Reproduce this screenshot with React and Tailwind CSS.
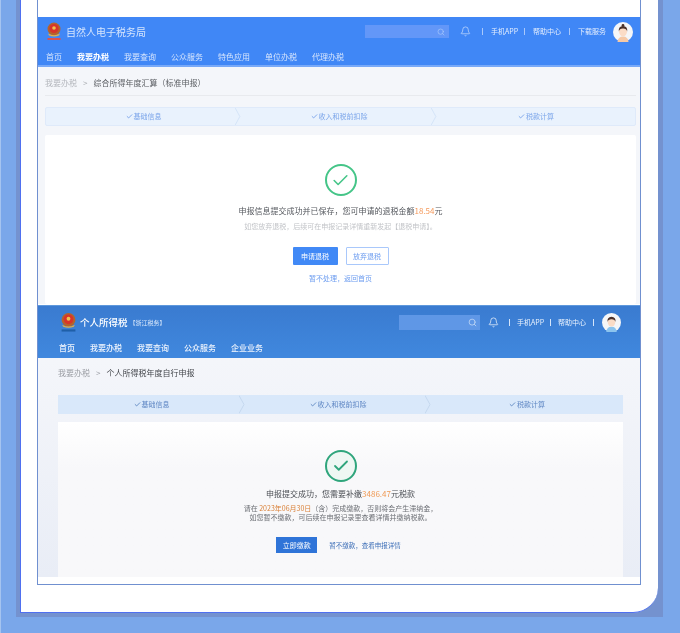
import React from "react";
import { Search, Bell, Check } from "lucide-react";

const Emblem = ({ w = 16, h = 19, label = true }) => (
  <svg width={w} height={h} viewBox="0 0 16 19" className="shrink-0">
    <circle cx="8" cy="7" r="6.5" fill="#b5632c" />
    <circle cx="8" cy="6.5" r="4.6" fill="#d8342a" />
    <circle cx="8" cy="6" r="1.8" fill="#efc24f" />
    <path d="M2 11.5 Q8 15 14 11.5 L13 13.5 Q8 15.5 3 13.5Z" fill="#e3b04a" />
    {label && <rect x="1.5" y="16" width="13" height="2" fill={w > 16 ? "#1f5fa8" : "#d9534f"} />}
  </svg>
);

const Avatar = ({ size, dark }) => (
  <svg width={size} height={size} viewBox="0 0 20 20" className="shrink-0">
    <circle cx="10" cy="10" r="10" fill="#f5f6f8" />
    <path d="M4.5 20 Q5 14.5 10 14.5 Q15 14.5 15.5 20Z" fill={dark ? "#8cc4ee" : "#f6c9a6"} />
    <ellipse cx="10" cy="9.5" rx="4" ry="4.8" fill="#fbdcc6" />
    <path d="M5.8 9.5 Q5.2 4.2 10 4 Q14.8 4.2 14.2 9.5 Q13.5 6.5 10 6.6 Q6.5 6.5 5.8 9.5Z" fill="#4a3029" />
    {!dark && <circle cx="10" cy="3.4" r="1.4" fill="#4a3029" />}
  </svg>
);

const Chevron = ({ color }) => (
  <svg width="6" height="18" viewBox="0 0 6 18" className="absolute right-0 top-0 h-full">
    <path d="M0 0 L5 9 L0 18" fill="none" stroke={color} strokeWidth="1" />
  </svg>
);

const Step = ({ label, chevron, color, tick }) => (
  <div className="relative flex items-center justify-center gap-px">
    <Check size={7} strokeWidth={2.5} color={tick} />
    <span>{label}</span>
    {chevron && <Chevron color={color} />}
  </div>
);

export default function App() {
  return (
    <div className="w-[680px] h-[633px] overflow-hidden bg-[#7aa7ea] pl-4 font-['Noto_Sans_CJK_SC','Noto_Sans',sans-serif] border-l border-l-[#a5c4f0]">
      <div className="w-[647px] h-[617px] bg-[#7492cf] pl-1 pr-[5px] pb-1 -ml-px">
        <div className="h-[613px] bg-white border-l border-b border-[#4f70f0] rounded-br-[25px] pl-4 pr-[17px] pb-[27px]">
          <div className="h-[585px] border-x border-b border-[#7090d0] pt-[17px] flex flex-col">
            {/* first screenshot */}
            <section className="h-[287px] bg-[#f4f6fa] flex flex-col blur-[0.35px]">
              <header className="h-[50px] bg-[#4087f6] border-b-2 border-[#78a9f8] text-white flex flex-col shrink-0">
                <div className="h-[29px] flex items-center pl-2 pr-[7px]">
                  <Emblem />
                  <span className="ml-1 text-[10px] leading-none text-[#d6e5fd]">自然人电子税务局</span>
                  <div className="ml-auto w-[84px] h-[13px] bg-[#6397f8] flex items-center justify-end pr-1">
                    <Search size={8} color="#a9c8fb" />
                  </div>
                  <Bell size={11} strokeWidth={1.3} className="ml-[11px] text-[#e4eefe]" />
                  <div className="ml-[11px] flex items-center text-[7px] leading-none text-[#e4eefe] whitespace-nowrap">
                    <span className="w-px h-[7px] bg-[#a9c8fb]" />
                    <span className="ml-2 w-[28px]">手机APP</span>
                    <span className="ml-[5px] w-px h-[7px] bg-[#a9c8fb]" />
                    <span className="ml-2">帮助中心</span>
                    <span className="ml-2 w-px h-[7px] bg-[#a9c8fb]" />
                    <span className="ml-2">下载服务</span>
                  </div>
                  <span className="ml-[7px]"><Avatar size={20} /></span>
                </div>
                <nav className="flex-1 flex gap-[15px] pl-2 text-[8px] leading-none text-[#d6e5fd] items-start pt-[7px]">
                  <span>首页</span>
                  <span className="font-bold text-white">我要办税</span>
                  <span>我要查询</span>
                  <span>公众服务</span>
                  <span>特色应用</span>
                  <span>单位办税</span>
                  <span>代理办税</span>
                </nav>
              </header>
              <div className="pl-[7px] pr-1 flex flex-col flex-1">
                <div className="h-[29px] border-b border-[#e8eaee] flex items-center pt-1 text-[8px] leading-none text-[#b4b7bd] shrink-0">
                  <span>我要办税</span>
                  <span className="mx-[6px] text-[#a8abb0]">&gt;</span>
                  <span className="text-[#5b5e63]">综合所得年度汇算（标准申报）</span>
                </div>
                <div className="mt-[11px] h-[19px] grid grid-cols-[195px_196px_1fr] bg-[#e9f2fd] border border-[#dfeafa] rounded-[2px] text-[7px] leading-none text-[#7ca6ea] shrink-0">
                  <Step label="基础信息" chevron color="#d3e3f8" tick="#5d90e6" />
                  <Step label="收入和税前扣除" chevron color="#d3e3f8" tick="#5d90e6" />
                  <Step label="税款计算" color="#d3e3f8" tick="#5d90e6" />
                </div>
                <div className="mt-[9px] flex-1 bg-white rounded-[2px] flex flex-col items-center pt-[29px]">
                  <div className="w-[32px] h-[32px] rounded-full border-2 border-[#45c588] flex items-center justify-center">
                    <Check size={19} strokeWidth={2} color="#45c588" />
                  </div>
                  <p className="mt-[10px] text-[8px] leading-[10px] text-[#55585e]">申报信息提交成功并已保存，您可申请的退税金额<span className="text-[#f59a5c]">18.54</span>元</p>
                  <p className="mt-[5px] text-[7px] leading-[10px] text-[#c2c4c8]">如您放弃退税，后续可在申报记录详情重新发起【退税申请】。</p>
                  <div className="mt-[16px] flex gap-2">
                    <button className="w-[45px] h-[18px] bg-[#4189f6] rounded-[1px] text-white text-[7px] leading-none">申请退税</button>
                    <button className="w-[43px] h-[18px] bg-white border border-[#a9c8fb] rounded-[1px] text-[#6d9df0] text-[7px] leading-none">放弃退税</button>
                  </div>
                  <p className="mt-2 text-[7px] leading-[10px] text-[#6d9df0]">暂不处理，返回首页</p>
                </div>
              </div>
            </section>

            <div className="h-px bg-white shrink-0" />

            {/* second screenshot */}
            <section className="h-[272px] bg-gradient-to-b from-[#f7f8fb] to-[#e9edf6] border-t border-[#5e98dc] flex flex-col blur-[0.4px]">
              <header className="h-[52px] bg-gradient-to-b from-[#3a7bd0] to-[#4088de] text-white flex flex-col shrink-0">
                <div className="h-[33px] flex items-center pl-[22px] pr-[19px]">
                  <Emblem w={17} h={23} />
                  <span className="ml-[3px] text-[9.5px] leading-none font-medium">个人所得税</span>
                  <span className="ml-[2px] text-[6px] leading-none text-[#dbe9fb]">【浙江税务】</span>
                  <div className="ml-auto w-[81px] h-[15px] bg-[#5f97e6] flex items-center justify-end pr-[3px]">
                    <Search size={9} color="#c8dcf6" />
                  </div>
                  <Bell size={11} strokeWidth={1.5} className="ml-2 text-white" />
                  <div className="ml-[10px] flex items-center gap-[7px] text-[7px] leading-none text-[#eaf2fd] whitespace-nowrap">
                    <span className="w-px h-[7px] bg-[#d5e5fa]" />
                    <span className="w-[26px]">手机APP</span>
                    <span className="w-px h-[7px] bg-[#d5e5fa]" />
                    <span>帮助中心</span>
                    <span className="w-px h-[7px] bg-[#d5e5fa]" />
                  </div>
                  <span className="ml-2"><Avatar size={19} dark /></span>
                </div>
                <nav className="flex gap-[15px] pl-[21px] text-[8px] leading-none text-[#eef4fd] font-medium pt-[5px]">
                  <span>首页</span>
                  <span>我要办税</span>
                  <span>我要查询</span>
                  <span>公众服务</span>
                  <span>企业业务</span>
                </nav>
              </header>
              <div className="pl-5 pr-[17px] flex flex-col flex-1 min-h-0">
                <div className="h-[29px] flex items-center text-[8px] leading-none text-[#9a9da3] shrink-0">
                  <span>我要办税</span>
                  <span className="mx-[6px]">&gt;</span>
                  <span className="text-[#44474c]">个人所得税年度自行申报</span>
                </div>
                <div className="mt-2 h-[19px] grid grid-cols-[187px_186px_1fr] bg-[#d9e8fa] text-[7px] leading-none text-[#5f87c4] shrink-0">
                  <Step label="基础信息" chevron color="#c5d8ef" tick="#3f6fb5" />
                  <Step label="收入和税前扣除" chevron color="#c5d8ef" tick="#3f6fb5" />
                  <Step label="税款计算" color="#c5d8ef" tick="#3f6fb5" />
                </div>
                <div className="mt-2 flex-1 min-h-0 bg-gradient-to-b from-white to-[#f8f8fa] to-[30%] flex flex-col items-center pt-[28px]">
                  <div className="w-[32px] h-[32px] rounded-full border-2 border-[#2fa57c] bg-[#eef7f3] flex items-center justify-center">
                    <Check size={18} strokeWidth={2.4} color="#2fa57c" />
                  </div>
                  <p className="mt-[7px] text-[8px] leading-[10px] text-[#4b4e54]">申报提交成功，您需要补缴<span className="text-[#ef9a55]">3486.47</span>元税款</p>
                  <p className="mt-[5px] text-[7px] leading-[9px] text-[#6b6e74]">请在 <span className="text-[#d98038]">2023年06月30日</span>（含）完成缴款，否则将会产生滞纳金，</p>
                  <p className="text-[7px] leading-[9px] text-[#6b6e74]">如您暂不缴款，可后续在申报记录里查看详情并缴纳税款。</p>
                  <div className="mt-[15px] flex items-center gap-3 -ml-1">
                    <button className="w-[41px] h-[16px] bg-[#2f74d8] text-white text-[7px] leading-none">立即缴款</button>
                    <span className="text-[6.5px] leading-none text-[#3f70b8]">暂不缴款，查看申报详情</span>
                  </div>
                </div>
              </div>
            </section>
          </div>
        </div>
      </div>
    </div>
  );
}
